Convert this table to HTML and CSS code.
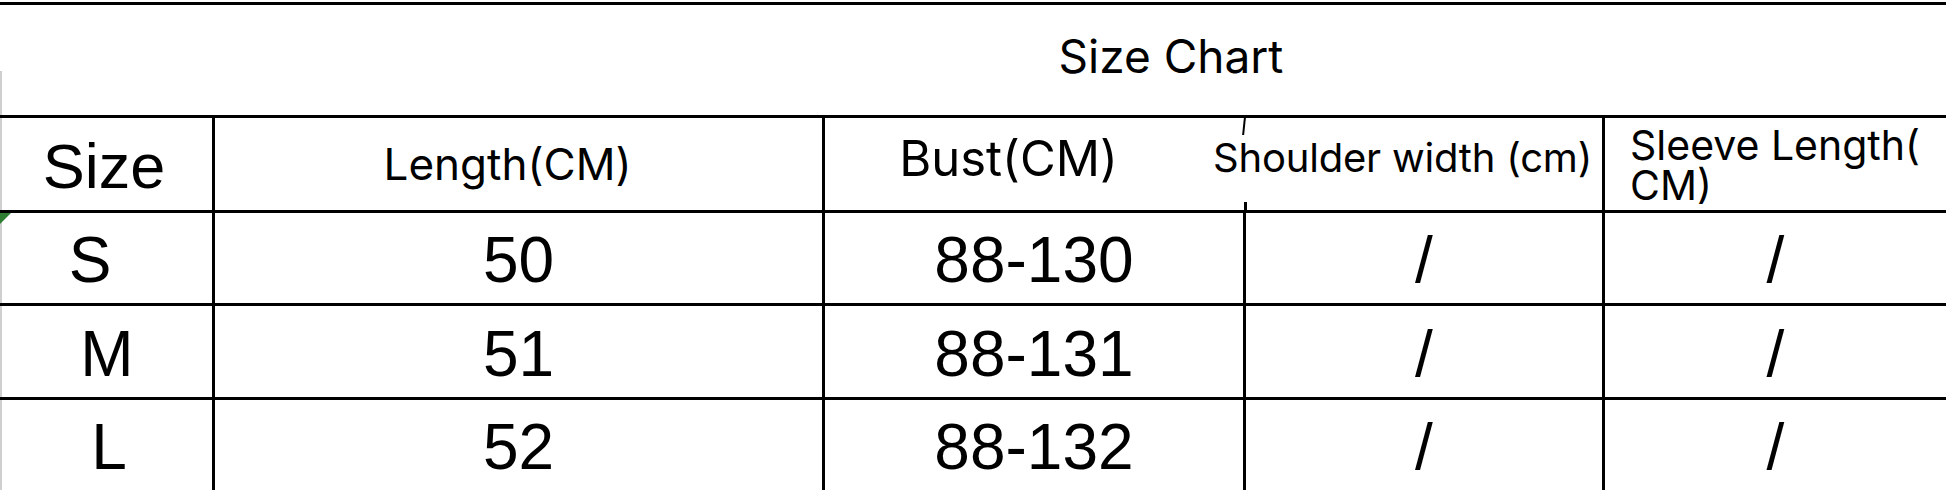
FILE: index.html
```html
<!DOCTYPE html>
<html lang="en">
<head>
<meta charset="utf-8">
<title>Size Chart</title>
<link rel="stylesheet" href="styles.css">
</head>
<body>
<div class="chart">
  <div class="title-row"><span class="title">Size Chart</span></div>
  <div class="row head">
    <div class="cell c-size">Size</div>
    <div class="cell c-len">Length(CM)</div>
    <div class="cell c-bust">Bust(CM)</div>
    <div class="cell c-shoulder"><span>Shoulder width (cm)</span></div>
    <div class="cell c-sleeve">Sleeve Length(<br>CM)</div>
  </div>
  <div class="row data row-s">
    <div class="cell c-size size-s">S</div>
    <div class="cell">50</div>
    <div class="cell">88-130</div>
    <div class="cell">/</div>
    <div class="cell">/</div>
  </div>
  <div class="row data row-m">
    <div class="cell c-size">M</div>
    <div class="cell">51</div>
    <div class="cell">88-131</div>
    <div class="cell">/</div>
    <div class="cell">/</div>
  </div>
  <div class="row data row-l">
    <div class="cell c-size size-l">L</div>
    <div class="cell">52</div>
    <div class="cell">88-132</div>
    <div class="cell">/</div>
    <div class="cell">/</div>
  </div>
</div>
</body>
</html>
```

FILE: styles.css
```css
* { box-sizing: border-box; }
html, body { margin: 0; background: #fff; }
body { padding-top: 2px; color: #000; }

.chart { width: 1946px; }

.title-row {
  height: 113px;
  border-top: 3px solid #000;
  display: flex;
  align-items: center;
  justify-content: center;
  padding-left: 396px;
  padding-bottom: 8px;
  background: linear-gradient(#cfcfcf, #cfcfcf) left 66px / 2px 50px no-repeat;
}
.title {
  font-family: Inter, "Noto Sans", sans-serif;
  font-size: 46px;
  line-height: 1;
}

.row {
  display: grid;
  grid-template-columns: 212px 610px 421px 359px 344px;
  border-top: 3px solid #000;
}
.row.head { grid-template-columns: 212px 610px 388px 392px 344px; }
.head { height: 95px; }
.row-s { height: 93px; }
.row-m { height: 94px; }
.row-l { height: 93px; }

.cell {
  position: relative;
  display: flex;
  align-items: center;
  justify-content: center;
  border-left: 3px solid #000;
  line-height: 1;
  white-space: nowrap;
}
.cell.c-size { border-left: 2px solid #cfcfcf; }

.head .cell {
  font-family: Inter, "Noto Sans", sans-serif;
  font-size: 44px;
}
.head .c-size {
  font-family: "Liberation Sans", Arial, sans-serif;
  font-size: 63px;
  padding-right: 6px;
  padding-top: 4px;
}
.head .c-len { padding-right: 22px; }
.head .c-bust { font-size: 49px; padding-right: 18px; padding-bottom: 12px; }
.head .c-shoulder {
  border-left: none;
  padding-left: 3px;
  justify-content: flex-start;
  font-size: 40px;
  padding-bottom: 12px;
}
.head .c-shoulder span { letter-spacing: -0.2px; }
.head .c-shoulder::before {
  content: "";
  position: absolute;
  left: 33px;
  top: 0;
  width: 2px;
  height: 17px;
  background: #000;
  transform: skewX(-6deg);
}
.head .c-shoulder::after {
  content: "";
  position: absolute;
  left: 34px;
  bottom: 0;
  width: 3px;
  height: 8px;
  background: #000;
}
.head .c-sleeve {
  justify-content: flex-start;
  padding-left: 25px;
  padding-top: 2px;
  font-size: 41px;
  line-height: 0.98;
}

.data .cell {
  font-family: "Liberation Sans", Arial, sans-serif;
  font-size: 64px;
  padding-top: 4px;
}
.data .size-s { padding-right: 34px; }
.data .size-l { padding-left: 4px; }

.row-s .c-size::before {
  content: "";
  position: absolute;
  left: -2px;
  top: 0;
  width: 0;
  height: 0;
  border-top: 11px solid #2f7d32;
  border-right: 11px solid transparent;
}
```
